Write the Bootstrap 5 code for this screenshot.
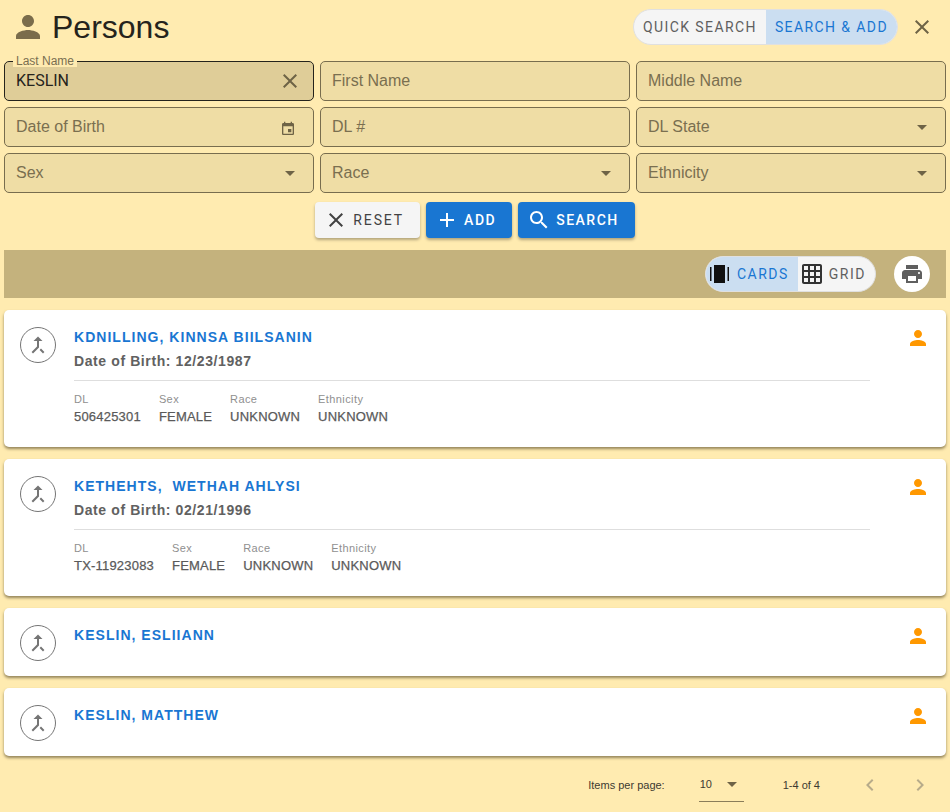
<!DOCTYPE html>
<html lang="en">
<head>
<meta charset="UTF-8">
<meta name="viewport" content="width=device-width, initial-scale=1.0">
<title>Persons</title>
<link href="https://cdn.jsdelivr.net/npm/bootstrap@5.3.0/dist/css/bootstrap.min.css" rel="stylesheet">
<style>
body { background: #ffebb0; font-family: "Liberation Sans", Arial, sans-serif; color: #212121; overflow: hidden; }
.page-wrap { padding: 0 4px; }
.head-row { height: 61px; padding-bottom: 7px; }
.head-title { font-family: "Liberation Sans", Arial, sans-serif; font-size: 32px; font-weight: 400; line-height: 1; margin: 0 0 0 6px; color: #25231c; }
.head-icon { width: 36px; height: 36px; fill: #7a6c4b; margin-left: 6px; }
.close-ico { width: 24px; height: 24px; fill: #6e6346; margin: 0 12px 0 12px; }

.pill { border: 1px solid #e0e0e0; border-radius: 18px; overflow: hidden; background: #f5f5f5; height: 36px; font-family: Roboto, sans-serif; }
.pill-item { font-size: 14px; letter-spacing: 1.4px; color: #5f5f5f; padding: 0 9px; }
.pill-on { background: #cbdef1; color: #1976d2; }

.field-grid { display: grid; grid-template-columns: repeat(3, 1fr); gap: 6px; }
.fld { height: 40px; background: #efdda5; border: 1px solid #786d4e; border-radius: 5px; padding: 0 11px; position: relative; }
.fld input, .fld select { border: 0; background: none; box-shadow: none; padding: 0; font-size: 16px; height: 38px; border-radius: 0; color: #7a6f50; font-family: "Liberation Sans", Arial, sans-serif; }
.fld input::placeholder { color: #7a6f50; opacity: 1; }
.fld select { -webkit-appearance: none; appearance: none; background-image: none; }
.fld-focus { background: #dfcd98; border-color: #25231c; }
.fld-focus input { color: #25231c; font-family: Roboto, sans-serif; padding-bottom: 2px; }
.fld-label { position: absolute; top: -7px; left: 8px; background: #ffebb0; padding: 0 3px; font-size: 12px; line-height: 12px; color: #7a6f50; }
.fld-ico { width: 24px; height: 24px; fill: #6e6346; flex: none; }
.fld-ico-sm { width: 16px; height: 16px; fill: #6e6346; flex: none; margin-right: 6px; margin-top: 3px; }
.caret { width: 0; height: 0; border-left: 5px solid transparent; border-right: 5px solid transparent; border-top: 5px solid #6e6346; margin-right: 7px; flex: none; }

.btn-row { margin-top: 9px; height: 36px; gap: 6px; }
.act-btn { height: 36px; font-family: Roboto, sans-serif; font-size: 14px; font-weight: 500; letter-spacing: 1.5px; border: 0; border-radius: 4px; padding: 0 16px 0 9px; gap: 5px; box-shadow: 0 2px 3px rgba(0,0,0,.3); }
.act-btn svg { width: 24px; height: 24px; fill: currentColor; }
.act-light { background: #f5f5f5; color: #424242; font-weight: 400; letter-spacing: 1.9px; }
.act-blue { background: #1976d2; color: #fff; }
.act-blue:hover, .act-light:hover { color: inherit; }

.tool-bar { margin-top: 12px; height: 48px; background: #c4b27d; padding-right: 16px; }
.tool-bar .pill-item { padding: 0 9px 0 2px; gap: 5px; letter-spacing: 1.5px; }
.tool-bar .pill-on { padding-left: 1px; gap: 6px; }
.tool-bar .pill-item svg { width: 24px; height: 24px; }
.print-btn { width: 36px; height: 36px; background: #fff; border-radius: 50%; margin-left: 18px; }
.print-btn svg { width: 24px; height: 24px; fill: #5f5f5f; }

.person-list { margin-top: 12px; gap: 12px; }
.person-card { border: 0; border-radius: 5px; box-shadow: 0 2px 3px rgba(60,50,20,.55); padding: 17px 16px 0; min-height: 68px; }
.merge-circle { width: 36px; height: 36px; border: 1px solid #757575; border-radius: 50%; flex: none; margin-right: 18px; }
.merge-circle svg { width: 24px; height: 24px; fill: #757575; }
.person-name { font-size: 14px; font-weight: 700; letter-spacing: 1.03px; color: #1976d2; line-height: 20px; white-space: pre; }
.person-dob { font-size: 14px; font-weight: 700; letter-spacing: .6px; color: #616161; line-height: 20px; margin-top: 4px; }
.person-sep { border-top: 1px solid #dedede; margin: 9px 0 0 0; opacity: 1; width: 796px; }
.info-row { gap: 18px; margin-top: 11px; padding-bottom: 21px; }
.info-key { font-size: 11px; letter-spacing: .4px; color: #8f8f8f; line-height: 14px; }
.info-val { font-size: 13px; letter-spacing: .2px; color: #5a5a5a; line-height: 18px; margin-top: 2px; -webkit-text-stroke: .25px #5a5a5a; }
.person-ico { width: 24px; height: 24px; fill: #ff9800; flex: none; margin: -1px 0 0 auto; }

.pager { height: 56px; padding-top: 2px; padding-right: 14px; font-size: 11px; color: #3d3a30; }
.pager-size { width: 45px; height: 34px; border-bottom: 1px solid #8a7d5a; margin-left: 34px; padding: 0 0 0 1px; }
.pager-caret { width: 0; height: 0; border-left: 5px solid transparent; border-right: 5px solid transparent; border-top: 5px solid #6e6346; margin-right: 7px; }
.pager-range { margin-left: 39px; margin-right: 12px; }
.pager svg { width: 24px; height: 24px; fill: #b7ab8a; margin-left: 26px; }
</style>
</head>
<body>
<svg class="d-none">
  <symbol id="i-person" viewBox="0 0 24 24"><path d="M12 12c2.21 0 4-1.79 4-4s-1.79-4-4-4-4 1.79-4 4 1.79 4 4 4zm0 2c-2.67 0-8 1.34-8 4v2h16v-2c0-2.66-5.33-4-8-4z"/></symbol>
  <symbol id="i-close" viewBox="0 0 24 24"><path d="M19 6.41L17.59 5 12 10.59 6.41 5 5 6.41 10.59 12 5 17.59 6.41 19 12 13.41 17.59 19 19 17.59 13.41 12z"/></symbol>
  <symbol id="i-event" viewBox="0 0 24 24"><path d="M17 12h-5v5h5v-5zM16 1v2H8V1H6v2H5c-1.11 0-1.99.9-1.99 2L3 19c0 1.1.89 2 2 2h14c1.1 0 2-.9 2-2V5c0-1.1-.9-2-2-2h-1V1h-2zm3 18H5V8h14v11z"/></symbol>
  <symbol id="i-add" viewBox="0 0 24 24"><path d="M19 13h-6v6h-2v-6H5v-2h6V5h2v6h6v2z"/></symbol>
  <symbol id="i-search" viewBox="0 0 24 24"><path d="M15.5 14h-.79l-.28-.27C15.41 12.59 16 11.11 16 9.5 16 5.91 13.09 3 9.5 3S3 5.91 3 9.5 5.91 16 9.5 16c1.61 0 3.09-.59 4.23-1.57l.27.28v.79l5 4.99L20.49 19l-4.99-5zm-6 0C7.01 14 5 11.99 5 9.5S7.01 5 9.5 5 14 7.01 14 9.5 11.99 14 9.5 14z"/></symbol>
  <symbol id="i-cards" viewBox="0 0 24 24"><path d="M3 5h1.5v14H3zM7 3h11v18H7zM20.5 5H22v14h-1.5z"/></symbol>
  <symbol id="i-grid" viewBox="0 0 24 24"><path d="M20 2H4c-1.1 0-2 .9-2 2v16c0 1.1.9 2 2 2h16c1.1 0 2-.9 2-2V4c0-1.1-.9-2-2-2zM8 20H4v-4h4v4zm0-6H4v-4h4v4zm0-6H4V4h4v4zm6 12h-4v-4h4v4zm0-6h-4v-4h4v4zm0-6h-4V4h4v4zm6 12h-4v-4h4v4zm0-6h-4v-4h4v4zm0-6h-4V4h4v4z"/></symbol>
  <symbol id="i-print" viewBox="0 0 24 24"><path d="M19 8H5c-1.66 0-3 1.34-3 3v6h4v4h12v-4h4v-6c0-1.66-1.34-3-3-3zm-3 11H8v-5h8v5zm3-7c-.55 0-1-.45-1-1s.45-1 1-1 1 .45 1 1-.45 1-1 1zm-1-9H6v4h12V3z"/></symbol>
  <symbol id="i-merge" viewBox="0 0 24 24"><path d="M17 20.41L18.41 19 15 15.59 13.59 17 17 20.41zM7.5 8H11v5.59L5.59 19 7 20.41l6-6V8h3.5L12 3.5 7.5 8z"/></symbol>
  <symbol id="i-prev" viewBox="0 0 24 24"><path d="M15.41 7.41L14 6l-6 6 6 6 1.41-1.41L10.83 12z"/></symbol>
  <symbol id="i-next" viewBox="0 0 24 24"><path d="M10 6L8.59 7.41 13.17 12l-4.58 4.59L10 18l6-6z"/></symbol>
</svg>

<div class="page-wrap">
  <div class="head-row d-flex align-items-center">
    <svg class="head-icon"><use href="#i-person"/></svg>
    <h1 class="head-title">Persons</h1>
    <div class="pill d-flex ms-auto">
      <div class="pill-item d-flex align-items-center">QUICK SEARCH</div>
      <div class="pill-item pill-on d-flex align-items-center">SEARCH &amp; ADD</div>
    </div>
    <svg class="close-ico"><use href="#i-close"/></svg>
  </div>

  <div class="field-grid">
    <div class="fld fld-focus d-flex align-items-center">
      <span class="fld-label">Last Name</span>
      <input class="form-control" type="text" value="KESLIN">
      <svg class="fld-ico"><use href="#i-close"/></svg>
    </div>
    <div class="fld d-flex align-items-center"><input class="form-control" type="text" placeholder="First Name"></div>
    <div class="fld d-flex align-items-center"><input class="form-control" type="text" placeholder="Middle Name"></div>
    <div class="fld d-flex align-items-center">
      <input class="form-control" type="text" placeholder="Date of Birth">
      <svg class="fld-ico-sm"><use href="#i-event"/></svg>
    </div>
    <div class="fld d-flex align-items-center"><input class="form-control" type="text" placeholder="DL #"></div>
    <div class="fld d-flex align-items-center">
      <select class="form-select"><option>DL State</option></select><span class="caret"></span>
    </div>
    <div class="fld d-flex align-items-center">
      <select class="form-select"><option>Sex</option></select><span class="caret"></span>
    </div>
    <div class="fld d-flex align-items-center">
      <select class="form-select"><option>Race</option></select><span class="caret"></span>
    </div>
    <div class="fld d-flex align-items-center">
      <select class="form-select"><option>Ethnicity</option></select><span class="caret"></span>
    </div>
  </div>

  <div class="btn-row d-flex justify-content-center">
    <button class="btn act-btn act-light d-flex align-items-center"><svg><use href="#i-close"/></svg>RESET</button>
    <button class="btn act-btn act-blue d-flex align-items-center"><svg><use href="#i-add"/></svg>ADD</button>
    <button class="btn act-btn act-blue d-flex align-items-center"><svg><use href="#i-search"/></svg>SEARCH</button>
  </div>

  <div class="tool-bar d-flex align-items-center justify-content-end">
    <div class="pill d-flex">
      <div class="pill-item pill-on d-flex align-items-center"><svg fill="#111"><use href="#i-cards"/></svg>CARDS</div>
      <div class="pill-item d-flex align-items-center"><svg fill="#333"><use href="#i-grid"/></svg>GRID</div>
    </div>
    <div class="print-btn d-flex align-items-center justify-content-center"><svg><use href="#i-print"/></svg></div>
  </div>

  <div class="person-list d-flex flex-column" id="personList"></div>

  <div class="pager d-flex align-items-center justify-content-end">
    <span>Items per page:</span>
    <div class="pager-size d-flex align-items-center justify-content-between"><span>10</span><span class="pager-caret"></span></div>
    <span class="pager-range">1-4 of 4</span>
    <svg><use href="#i-prev"/></svg>
    <svg><use href="#i-next"/></svg>
  </div>
</div>

<script src="https://cdn.jsdelivr.net/npm/bootstrap@5.3.0/dist/js/bootstrap.bundle.min.js"></script>
<script>
const persons = [
  { name: 'KDNILLING, KINNSA BIILSANIN', dob: '12/23/1987', dl: '506425301', sex: 'FEMALE', race: 'UNKNOWN', eth: 'UNKNOWN' },
  { name: 'KETHEHTS,  WETHAH AHLYSI', dob: '02/21/1996', dl: 'TX-11923083', sex: 'FEMALE', race: 'UNKNOWN', eth: 'UNKNOWN' },
  { name: 'KESLIN, ESLIIANN' },
  { name: 'KESLIN, MATTHEW' }
];

const infoCol = (key, val) => `<div><div class="info-key">${key}</div><div class="info-val">${val}</div></div>`;

document.getElementById('personList').innerHTML = persons.map(p => `
  <div class="card person-card flex-row align-items-start">
    <div class="merge-circle d-flex align-items-center justify-content-center"><svg><use href="#i-merge"/></svg></div>
    <div class="flex-grow-1">
      <div class="person-name">${p.name}</div>
      ${p.dob ? `<div class="person-dob">Date of Birth: ${p.dob}</div>
      <hr class="person-sep">
      <div class="info-row d-flex">
        ${infoCol('DL', p.dl)}${infoCol('Sex', p.sex)}${infoCol('Race', p.race)}${infoCol('Ethnicity', p.eth)}
      </div>` : ''}
    </div>
    <svg class="person-ico"><use href="#i-person"/></svg>
  </div>`).join('');
</script>
</body>
</html>
